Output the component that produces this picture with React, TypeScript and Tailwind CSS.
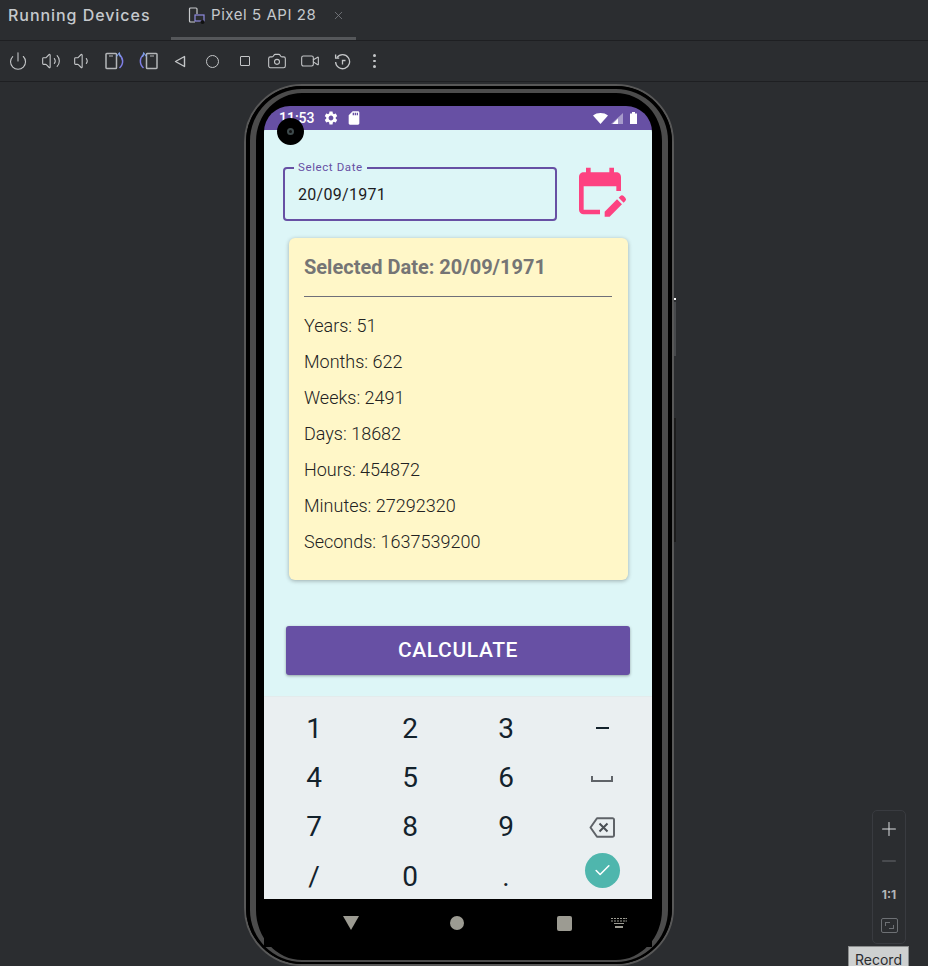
// App.tsx
import { Power, Volume2, Volume1, Camera, Video, X, Plus, Minus, Check } from 'lucide-react';
import { MdEditCalendar, MdSdCard, MdSettings } from 'react-icons/md';

const ROWS = ['Years: 51', 'Months: 622', 'Weeks: 2491', 'Days: 18682', 'Hours: 454872', 'Minutes: 27292320', 'Seconds: 1637539200'];
const KEYS = ['1', '2', '3', 'dash', '4', '5', '6', 'space', '7', '8', '9', 'del', '/', '0', '.', 'ok'];

function RotateIcon({ flip }: { flip?: boolean }) {
  return (
    <svg width="20" height="18" viewBox="0 0 20 18" fill="none" className={flip ? '-scale-x-100' : ''}>
      <rect x="1" y="1.500" width="10.500" height="15" rx="0.800" stroke="#b4b6b8" strokeWidth="1.500" />
      <path d="M4 4h4" stroke="#b4b6b8" strokeWidth="1" />
      <path d="M14 2.500c4.500 3 5 9.500.5 13.500" stroke="#7f7fe6" strokeWidth="1.500" />
      <path d="M11.500 4.500l2.800-3.500 1.200 4" stroke="#7f9fe6" strokeWidth="1.200" />
    </svg>
  );
}

function ToolBtn({ children }: { children: React.ReactNode }) {
  return <div className="flex w-[32.4px] items-center justify-center">{children}</div>;
}

function Toolbar() {
  const cls = 'text-[#c4c6c8]';
  return (
    <div className="flex h-[41px] items-center border-b border-[#1e1f22] pl-[2px]">
      <ToolBtn><Power size={20} strokeWidth={1.3} className={cls} /></ToolBtn>
      <ToolBtn><Volume2 size={20} strokeWidth={1.3} className={cls} /></ToolBtn>
      <ToolBtn><Volume1 size={20} strokeWidth={1.3} className={cls} /></ToolBtn>
      <ToolBtn><RotateIcon /></ToolBtn>
      <ToolBtn><RotateIcon flip /></ToolBtn>
      <ToolBtn>
        <svg width="12" height="13" viewBox="0 0 12 13" fill="none"><path d="M10.500 1.500v10L1.500 6.500z" stroke="#c4c6c8" strokeWidth="1.400" strokeLinejoin="round" /></svg>
      </ToolBtn>
      <ToolBtn><div className="h-[13px] w-[13px] rounded-full border-[1.5px] border-[#c4c6c8]" /></ToolBtn>
      <ToolBtn><div className="h-[10px] w-[10px] rounded-[1px] border-[1.5px] border-[#c4c6c8]" /></ToolBtn>
      <ToolBtn><Camera size={20} strokeWidth={1.3} className={cls} /></ToolBtn>
      <ToolBtn><Video size={20} strokeWidth={1.3} className={cls} /></ToolBtn>
      <ToolBtn>
        <svg width="17" height="17" viewBox="0 0 17 17" fill="none" stroke="#c4c6c8" strokeWidth="1.300">
          <path d="M3 4.500A7 7 0 1 1 1.600 9" />
          <path d="M1.600 1.500v3.600h3.600" />
          <path d="M8.500 11.500v-4h3" />
        </svg>
      </ToolBtn>
      <ToolBtn>
        <div className="flex flex-col gap-[3px]">
          <div className="h-[2.5px] w-[2.5px] rounded-full bg-[#c4c6c8]" />
          <div className="h-[2.5px] w-[2.5px] rounded-full bg-[#c4c6c8]" />
          <div className="h-[2.5px] w-[2.5px] rounded-full bg-[#c4c6c8]" />
        </div>
      </ToolBtn>
    </div>
  );
}

function StatusBar() {
  return (
    <div className="flex h-[24px] items-center justify-between bg-[#6750a4] pl-[15px] pr-[15px] font-['Roboto',sans-serif] text-white">
      <div className="flex items-center">
        <span className="w-[34px] text-[14px] font-medium">11:53</span>
        <MdSettings size={16} className="ml-[10px]" />
        <MdSdCard size={16} className="ml-[7px]" />
      </div>
      <div className="flex items-center gap-[3px]">
        <svg width="15" height="11" viewBox="0 0 15 11"><path d="M0 2.500C4 -.8 11 -.8 15 2.500L7.500 11z" fill="white" /></svg>
        <svg width="12" height="11" viewBox="0 0 12 11"><path d="M12 0v11H0z" fill="#a79bcb" /><path d="M7 5.500V11H1.500z" fill="white" /></svg>
        <svg width="7" height="12" viewBox="0 0 7 12" className="ml-[4px]"><path d="M0 1.500h2V0h3v1.500h2V12H0z" fill="white" /></svg>
      </div>
    </div>
  );
}

function DateRow() {
  return (
    <div className="flex items-start pl-[19px] pt-[37px]">
      <div className="relative flex h-[54px] w-[274px] items-center rounded-[4px] border-2 border-[#6750a4] pl-[13px] pt-[1px] text-[16px] tracking-[0.3px] text-[#1c1b1f]">
        <span className="absolute -top-[9px] left-[9px] bg-[#ddf6f7] px-[4px] text-[11.5px] leading-[14px] tracking-[0.6px] text-[#6750a4]">Select Date</span>
        20/09/1971
      </div>
      <MdEditCalendar size={56} className="ml-[15px] -mt-[4px] text-[#fd4281]" />
    </div>
  );
}

function ResultCard() {
  return (
    <div className="ml-[25px] mt-[17px] h-[342px] w-[339px] rounded-[6px] bg-[#fff7c8] px-[16px] pt-[17px] shadow-[0_1px_4px_rgba(0,0,0,0.3)]">
      <div className="-ml-px text-[20px] font-bold leading-[24px] text-[#757575]">Selected Date: 20/09/1971</div>
      <div className="mt-[17px] h-px w-[308px] -translate-x-px bg-[#6f6f78]" />
      <div className="mt-[11px] flex flex-col">
        {ROWS.map(row => (
          <div key={row} className="h-[36px] -ml-px text-[18px] font-light leading-[36px] text-[#222222]">{row}</div>
        ))}
      </div>
    </div>
  );
}

function Keyboard() {
  return (
    <div className="grid h-[203px] grid-cols-4 content-start border-t border-[#e3ebec] bg-[#eaeff1] px-[2px] pt-[7px]">
      {KEYS.map(k => (
        <div key={k} className="flex h-[49.3px] items-center justify-center text-[28px] text-[#13222c]">
          {k === 'dash' && <div className="-mt-[1px] h-[1.5px] w-[13px] bg-[#13222c]" />}
          {k === 'space' && <div className="mt-[2px] h-[6px] w-[22px] border-x-2 border-b-2 border-[#5f6368]" />}
          {k === 'del' && (
            <svg width="26" height="21" viewBox="0 0 26 21" fill="none">
              <path d="M8 1.200h15.500a1.500 1.500 0 0 1 1.500 1.500v15.600a1.500 1.500 0 0 1-1.500 1.500H8L1.500 10.500z" stroke="#5f6368" strokeWidth="2" strokeLinejoin="round" />
              <path d="M10.500 6.500l8 8m0-8l-8 8" stroke="#4a4f54" strokeWidth="2" />
            </svg>
          )}
          {k === 'ok' && (
            <div className="-mt-[13px] flex h-[35px] w-[35px] items-center justify-center rounded-full bg-[#4fb6ad]">
              <Check size={19} strokeWidth={2} className="text-white" />
            </div>
          )}
          {!['dash', 'space', 'del', 'ok'].includes(k) && k}
        </div>
      ))}
    </div>
  );
}

function NavBar() {
  return (
    <div className="flex h-[48px] items-center bg-black">
      <div className="ml-[79px] h-0 w-0 border-x-[8px] border-t-[14px] border-x-transparent border-t-[#9c9b92]" />
      <div className="ml-[91px] h-[14px] w-[14px] rounded-full bg-[#9c9b92]" />
      <div className="ml-[93px] h-[15px] w-[15px] rounded-[2px] bg-[#9c9b92]" />
      <svg width="16" height="10" viewBox="0 0 16 10" className="ml-[39px]" fill="#9c9b92">
        <path d="M0 0h2v1H0zM3 0h2v1H3zM6 0h2v1H6zM9 0h2v1H9zM12 0h2v1h-2zM14.500 0H16v1h-1.500zM0 2.500h2v1H0zM3 2.500h2v1H3zM6 2.500h2v1H6zM9 2.500h2v1H9zM12 2.500h2v1h-2zM14.500 2.500H16v1h-1.500zM3 5h10v1H3zM4 8h8v2H4z" />
      </svg>
    </div>
  );
}

function Phone() {
  return (
    <div className="relative ml-[244px] mt-[2px] h-[882px] w-[430px] rounded-[58px] border-2 border-[#585858] bg-black">
      <div className="absolute -right-[4px] top-[212px] h-[2px] w-[2px] bg-white" />
      <div className="absolute -right-[4px] top-[216px] h-[54px] w-[2px] bg-[#47494c]" />
      <div className="absolute -right-[4px] top-[332px] h-[124px] w-[2px] bg-[#1c1c1c]" />
      <div className="h-full rounded-[56px] border-x-[4px] border-b-[2px] border-t-[3px] border-black">
        <div className="h-full rounded-[52px] border-x-[6px] border-b-[2px] border-t-[4px] border-[#4c4c4c] bg-black pl-[8px] pt-[13px]">
          <div className="relative w-[388px] overflow-hidden rounded-t-[26px]">
            <StatusBar />
            <div className="h-[566px] bg-[#ddf6f7] font-['Roboto',sans-serif]">
              <DateRow />
              <ResultCard />
              <button className="ml-[22px] mt-[46px] flex h-[49px] w-[344px] items-center justify-center rounded-[3px] bg-[#6750a4] text-[21px] font-medium tracking-[0.6px] text-white shadow-[0_1px_3px_rgba(0,0,0,0.35)]">
                CALCULATE
              </button>
            </div>
            <div className="font-['Roboto',sans-serif]">
              <Keyboard />
            </div>
            <NavBar />
          </div>
        </div>
      </div>
      <div className="absolute left-[31px] top-[32px] flex h-[27px] w-[27px] items-center justify-center rounded-full bg-black">
        <div className="h-[7px] w-[7px] rounded-full border-2 border-[#3e4a4c] bg-[#111]" />
      </div>
    </div>
  );
}

export default function App() {
  return (
    <div className="relative h-[966px] w-[928px] overflow-hidden bg-[#2b2d30] font-['Inter',sans-serif]">
      <div className="flex h-[41px] items-center border-b border-[#1e1f22]">
        <span className="w-[171px] pb-[10px] pl-[8px] text-[16px] font-medium tracking-[0.95px] text-[#c5c9cd]">Running Devices</span>
        <div className="flex h-full items-center self-stretch border-b-[3px] border-[#55575a] pb-[7px] pl-[17px] pr-[11px]">
          <svg width="18" height="17" viewBox="0 0 18 17" fill="none" className="mr-[5px]">
            <path d="M7 15H2.500a1 1 0 0 1-1-1V2a1 1 0 0 1 1-1h5.500a1 1 0 0 1 1 1v5" stroke="#c8cacc" strokeWidth="1.200" />
            <rect x="7" y="8" width="9" height="6" stroke="#8f8be0" strokeWidth="1.200" />
            <circle cx="14.500" cy="15" r="2" fill="#111" />
          </svg>
          <span className="w-[105px] whitespace-nowrap text-[15px] tracking-[0.55px] text-[#c5c9cd]">Pixel 5 API 28</span>
          <X size={13} strokeWidth={1.5} className="ml-[16px] text-[#7b7e82]" />
        </div>
      </div>
      <Toolbar />
      <Phone />
      {/* zoom controls float over the device canvas */}
      <div className="absolute left-[872px] top-[810px] flex h-[134px] w-[34px] flex-col items-center rounded-[5px] border border-[#393b40] pt-[7px]">
        <Plus size={22} strokeWidth={1.1} className="text-[#dcdee0]" />
        <Minus size={22} strokeWidth={1} className="mt-[10px] text-[#6d7074]" />
        <span className="mt-[14px] text-[12px] font-bold text-[#b4b6b8]">1:1</span>
        <div className="mt-[14px] flex h-[15px] w-[17px] items-center justify-center rounded-[2px] border border-[#6d7074]">
          <div className="relative h-[7px] w-[9px]">
            <div className="absolute left-0 top-0 h-[4px] w-[5px] border-l border-t border-[#6d7074]" />
            <div className="absolute bottom-0 right-0 h-[4px] w-[5px] border-b border-r border-[#6d7074]" />
          </div>
        </div>
      </div>
      <div className="absolute left-[848px] top-[946px] h-[20px] w-[61px] border-x border-t border-[#8a8c8c] bg-[#ced0d0] pt-[7px] text-center text-[14px] leading-[12px] text-[#2b2d30]">Record</div>
    </div>
  );
}
